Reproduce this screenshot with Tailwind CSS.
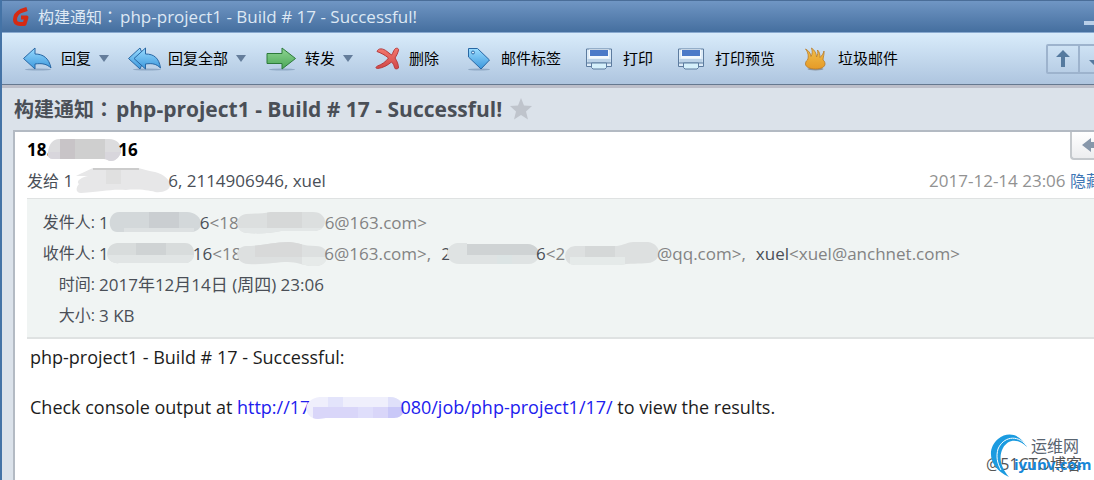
<!DOCTYPE html>
<html lang="zh-CN">
<head>
    <meta charset="UTF-8">
    <meta name="viewport" content="width=device-width, initial-scale=1.0">
    <title>构建通知：php-project1 - Build # 17 - Successful!</title>
    <script src="https://cdn.jsdelivr.net/npm/@tailwindcss/browser@4"></script>
</head>
<body class="min-h-screen flex flex-col overflow-hidden border-l-2 border-[#4473a6] bg-[#dbe2ea] font-['Open_Sans','Noto_Sans_CJK_SC',sans-serif] text-[#4a4f57]">
    <!-- Shared gradients and icons -->
    <svg class="absolute h-0 w-0" aria-hidden="true">
        <defs>
            <linearGradient id="blue" x1="0" y1="0" x2="0" y2="1"><stop offset="0" stop-color="#9adcff"/><stop offset="1" stop-color="#3b97dc"/></linearGradient>
            <linearGradient id="green" x1="0" y1="0" x2="0" y2="1"><stop offset="0" stop-color="#8fd592"/><stop offset="1" stop-color="#4aa657"/></linearGradient>
            <linearGradient id="red" x1="0" y1="0" x2="0" y2="1"><stop offset="0" stop-color="#f4776d"/><stop offset="1" stop-color="#d04848"/></linearGradient>
            <linearGradient id="gold" x1="0" y1="0" x2="0" y2="1"><stop offset="0" stop-color="#f2c04a"/><stop offset="1" stop-color="#e59a27"/></linearGradient>
        </defs>
        <symbol id="printer" viewBox="0 0 28 24">
            <path d="M1.500 2h25v17.500h-25z" fill="#dcebf8" stroke="#5d7c9f"/>
            <path d="M4 2.500h20v9H4z" fill="#f4f9fd"/>
            <path d="M5 3h18v6H5z" fill="#4c7ac8"/>
            <path d="M2.500 12h23v4h-23z" fill="#bcd3e8"/>
            <path d="M2 16h24" stroke="#5d7c9f"/>
            <path d="M6.500 16h15v4.500L20 22H8l-1.500-1.500z" fill="#d5f0fb" stroke="#5d7c9f"/>
        </symbol>
    </svg>

    <header class="flex h-8 shrink-0 items-center border-t border-[#4a6d98] bg-linear-to-b from-[#7096c4] to-[#456f9f] pl-[10px] text-[17px] leading-5 text-[#dde8f4]">
        <svg class="mr-2 h-5 w-[18px]" viewBox="0 0 18 20" fill="none">
            <path d="M15 2 9 4C5 6 3 9 3 12.500c0 3 2 4.500 5 4.500h4.500l2-6.500H9" stroke="#d62a12" stroke-width="4" stroke-linejoin="round"/>
        </svg>
        <h1 class="whitespace-nowrap"><span class="mr-0.5 text-[16px]">构建通知<span class="font-['Noto_Sans_CJK_JP']" lang="ja">：</span></span>php-project1 - Build # 17 - Successful!</h1>
        <button class="mt-3 -mr-2 ml-auto h-1 w-[18px] bg-[#b9cfe8]" aria-label="最小化"></button>
    </header>

    <nav class="flex h-[53px] shrink-0 items-center border-t border-b border-t-[#89aad0] border-b-[#65788f] bg-linear-to-b from-[#d9ecfb] to-[#aec5df] pl-5 text-[15px] whitespace-nowrap text-black">
        <button class="flex items-center">
            <svg class="mr-2 h-6 w-[31px]" viewBox="0 0 31 24">
                <ellipse cx="16" cy="22.500" rx="13" ry="1" fill="#90a9c5"/>
                <path d="M1.500 11.500 13 1v6c8 0 14 4 16 14-4-4-9-5-16-4v5z" fill="url(#blue)" stroke="#2867a4"/>
            </svg>
            回复
            <svg class="ml-2 h-2 w-[10px]" viewBox="0 0 10 8"><path d="M0 0h10L5 7z" fill="#647d9b"/></svg>
        </button>
        <button class="ml-[18px] flex items-center">
            <svg class="mr-[6px] h-6 w-[35px]" viewBox="0 0 35 24">
                <ellipse cx="20" cy="22.500" rx="14" ry="1" fill="#90a9c5"/>
                <path d="M1.500 11.500 13 1l2 5-5 5.500 5 6-2 4.500z" fill="url(#blue)" stroke="#2867a4"/>
                <path d="M7 11.500 18.500 1v6C27 7 32 11 33.500 21c-4-4-8-5-15-4v5z" fill="url(#blue)" stroke="#2867a4"/>
            </svg>
            回复全部
            <svg class="ml-2 h-2 w-[10px]" viewBox="0 0 10 8"><path d="M0 0h10L5 7z" fill="#647d9b"/></svg>
        </button>
        <button class="ml-5 flex items-center">
            <svg class="mr-2 h-6 w-[31px]" viewBox="0 0 31 24">
                <ellipse cx="16" cy="22.500" rx="13" ry="1" fill="#90a9c5"/>
                <path d="M1 6.500h15V1l13.500 10.500L16 22v-5.500H1z" fill="url(#green)" stroke="#2c7a3a"/>
            </svg>
            转发
            <svg class="ml-2 h-2 w-[10px]" viewBox="0 0 10 8"><path d="M0 0h10L5 7z" fill="#647d9b"/></svg>
        </button>
        <button class="ml-[22px] flex items-center">
            <svg class="mr-2 h-6 w-[26px]" viewBox="0 0 26 24">
                <path d="M2 4.500C3 1 8 1 12 4.500l4.500 3.500C18 6 18.500 4 19.500 2.500c1-2 4.500-1.500 4 .5-.5 3-2 5.500-3.500 8 2 3 3.500 6.500 3.500 10-1.500 1.500-4 1-4-.5-.5-2.500-1.500-4-3-5.500-4 3.500-9 6-14 6.500-2 0-2-1.500 0-2.500 4.500-1.500 8.500-4.500 11-8C10 8 6 6 2 4.500z" fill="url(#red)" stroke="#b63a3c"/>
            </svg>
            删除
        </button>
        <button class="ml-7 flex items-center">
            <svg class="mr-[10px] h-6 w-6" viewBox="0 0 24 24">
                <ellipse cx="12" cy="22.500" rx="11" ry="1" fill="#90a9c5"/>
                <path d="M1.500 1.500h9L22.500 13 14 22 1.500 10z" fill="url(#blue)" stroke="#2867a4"/>
                <circle cx="6" cy="5.500" r="1.500" fill="#d9ecfb" stroke="#2867a4"/>
            </svg>
            邮件标签
        </button>
        <button class="ml-6 flex items-center">
            <svg class="mr-[10px] h-6 w-7"><use href="#printer"/></svg>
            打印
        </button>
        <button class="ml-6 flex items-center">
            <svg class="mr-[10px] h-6 w-7"><use href="#printer"/></svg>
            打印预览
        </button>
        <button class="ml-[29px] flex items-center">
            <svg class="mr-3 h-6 w-[22px]" viewBox="0 0 22 24">
                <ellipse cx="11.500" cy="22" rx="8" ry="1.500" fill="#8b95a0"/>
                <path d="M1.500 2c3 1.500 5 4 5.500 7.500 1.500-2.500 1.500-5.500.5-8.500 3.500 2.500 5 5.500 5 9 1.500-2 1.500-4.500 1-7 2 2 2.500 4.500 2.500 7.500 1.500-1.500 3.500-4 4-6.500.5 3-1 6.500-1 9 1.500 1 2 2.500 2 4 0 3-4 5-9.500 5S1.500 20 1.500 17c0-1.500.5-3 2-4C5 9.500 4 5 1.500 2z" fill="url(#gold)" stroke="#b87a28" stroke-width=".8"/>
            </svg>
            垃圾邮件
        </button>
        <div class="-mr-5 ml-auto flex rounded-xs border-2 border-[#9db3cd] text-[#557a9f]">
            <button class="flex h-[26px] w-8 items-center justify-center border-r-2 border-[#9db3cd]" aria-label="上一封">
                <svg class="h-[17px] w-[14px]" viewBox="0 0 14 17" fill="currentColor"><path d="m7 0 7 7H9v10H5V7H0z"/></svg>
            </button>
            <button class="flex h-[26px] w-8 items-center justify-center" aria-label="下一封">
                <svg class="h-[17px] w-[14px]" viewBox="0 0 14 17" fill="currentColor"><path d="m7 17 7-7H9V0H5v10H0z"/></svg>
            </button>
        </div>
    </nav>

    <div class="flex h-[45px] shrink-0 items-center border-t-3 border-[#bcbec9] pl-3">
        <h2 class="text-[21px] leading-7 font-bold whitespace-nowrap"><span class="mr-0.5 text-[20px]">构建通知<span class="font-['Noto_Sans_CJK_JP']" lang="ja">：</span></span>php-project1 - Build # 17 - Successful!</h2>
        <button class="ml-2" aria-label="星标">
            <svg class="h-[22px] w-[22px]" viewBox="0 0 22 22"><path d="m11 0 3 7.500 8 .5-6 5.500 2 8-7-4.500L4 21.500l2-8L0 8l8-.5z" fill="#bfc4cc"/></svg>
        </button>
    </div>

    <main class="ml-[11px] flex-1 border-t-2 border-l-2 border-[#b3bac3] bg-white pl-3">
        <div class="flex h-9 items-center justify-between text-[17px] font-bold text-black">
            <p class="flex items-center">18.<svg class="-mx-1 h-[22px] w-[75px]" viewBox="0 0 75 22">
                    <clipPath id="c1"><path d="M12 0h50c8 0 12 5 12 11s-5 11-10 11c-3 0-4-2-7-2H6c-4 0-6-3-5-7C2 5 6 0 12 0z"/></clipPath>
                    <g clip-path="url(#c1)"><path d="M0 0h75v22H0z" fill="#dcdcde"/><path d="M13 0h15v22H13z" fill="#c8c4c7"/><path d="M28 0h30v22H28z" fill="#cfcfcf"/><path d="M0 13h13v9H0zM58 13h17v9H58z" fill="#d8d6dc"/></g>
                </svg>16</p>
            <button class="-mr-4 flex h-7 w-10 items-center justify-center self-start rounded-bl-sm border-b-2 border-l-2 border-[#c5c9cd] bg-linear-to-b from-white to-[#ecedef]" aria-label="快速回复">
                <svg class="h-[14px] w-[18px]" viewBox="0 0 18 14"><path d="m0 7 9-7v4h9v6H9v4z" fill="#8797aa"/></svg>
            </button>
        </div>
        <div class="flex h-[30px] items-center pb-1 text-[17px]">
            <p class="flex items-center whitespace-pre"><span class="text-[16px]">发给</span> 1<svg class="-mx-0.5 h-[26px] w-[99px]" viewBox="0 0 99 26">
                    <clipPath id="c2"><path d="M5 8c6-3 12-6 17-8h45c6 1 9 3 17 4 9 2 15 8 15 13s-7 8-15 7c-7-2-19-3-29-2-17-1-24 2-45 3-6 0-5-6-2-9-3-2 0-6 9-8z"/></clipPath>
                    <g clip-path="url(#c2)"><path d="M0 0h99v26H0z" fill="#e7e7e8"/><path d="M22 0h46v2H22z" fill="#ccc"/><path d="M35 2h15v14H35z" fill="#e0e0e0"/></g>
                </svg>6, 2114906946, xuel</p>
            <p class="-mr-2 ml-auto whitespace-nowrap text-[#929292]"><time>2017-12-14 23:06</time> <a href="#" class="text-[16px] text-[#3e76b5]">隐藏</a></p>
        </div>
        <dl class="grid grid-cols-[54px_1fr] gap-x-1 border-t border-b-2 border-[#dfe2e2] bg-[#f0f4f3] pt-2 pb-1.5 pl-[14px] text-[17px] leading-[31px] whitespace-nowrap">
            <dt class="text-right text-[16px]">发件人:</dt>
            <dd class="flex items-center">1<svg class="-mr-0.5 h-[21px] w-[93px]" viewBox="0 0 93 21">
                    <clipPath id="c3"><path d="M10 0h68c8 0 15 6 14 13-1 4-5 7-10 7H8c-10 0-10-20 2-20z"/></clipPath>
                    <g clip-path="url(#c3)"><path d="M0 0h93v21H0z" fill="#d3d8da"/><path d="M40 0h30v16H40z" fill="#caced1"/><path d="M15 16h70v5H15z" fill="#dde1e2"/></g>
                </svg>6<span class="flex items-center text-[#838383]">&lt;18<svg class="-ml-0.5 h-[22px] w-[88px]" viewBox="0 0 88 22">
                    <clipPath id="c4"><path d="M9 2c9-1 16 0 25-2h42c8 0 12 5 12 10s-5 9-11 9H44c-9 2-21 3-33 2C-2 21-4 4 9 2z"/></clipPath>
                    <g clip-path="url(#c4)"><path d="M0 0h88v22H0z" fill="#dcdfdf"/><path d="M30 0h35v16H30z" fill="#d6d8d8"/><path d="M0 16h88v6H0z" fill="#e3e7e7"/></g>
                </svg>6@163.com&gt;</span></dd>
            <dt class="text-right text-[16px]">收件人:</dt>
            <dd class="flex items-center">1<svg class="-mx-0.5 h-[21px] w-[88px]" viewBox="0 0 88 21">
                    <clipPath id="c5"><path d="M10 0h68c12 0 12 19 1 20H13C-4 22-3 1 10 0z"/></clipPath>
                    <g clip-path="url(#c5)"><path d="M0 0h88v21H0z" fill="#d8dcdc"/><path d="M29 0h30v12H29z" fill="#cfd3d4"/><path d="M0 12h88v9H0z" fill="#e1e5e5"/></g>
                </svg>16<span class="flex items-center text-[#838383]">&lt;18<svg class="-mx-1 h-[24px] w-[91px]" viewBox="0 0 91 24">
                    <clipPath id="c6"><path d="M9 4c15 0 28-4 42-4 10 0 14 4 28 4 15 0 15 19 0 20-9 1-18-4-28-4-12 0-22 3-40 2C-2 22-4 5 9 4z"/></clipPath>
                    <g clip-path="url(#c6)"><path d="M0 0h91v24H0z" fill="#dde0e0"/><path d="M18 0h47v15H18z" fill="#d8d9d9"/><path d="M65 15h26v9H65z" fill="#e6eae9"/></g>
                </svg>6@163.com&gt;,</span>
                <span class="ml-2.5">2</span><svg class="-mx-1 h-[21px] w-[93px]" viewBox="0 0 93 21">
                    <clipPath id="c7"><path d="M10 0h10v1h60c15 0 16 19 2 20H12C-4 20-3 2 10 0z"/></clipPath>
                    <g clip-path="url(#c7)"><path d="M0 0h93v21H0z" fill="#dfe3e3"/><path d="M20 0h73v12H20z" fill="#cfd3d4"/><path d="M50 12h15v9H50z" fill="#dce4e4"/></g>
                </svg>6<span class="flex items-center text-[#838383]">&lt;2<svg class="-mr-0.5 h-[24px] w-[94px]" viewBox="0 0 94 24">
                    <clipPath id="c8"><path d="M10 4h42c7-1 11-4 16-4h15c15 2 14 20 0 21-8 1-19 0-29 2H12C-4 24-3 5 10 4z"/></clipPath>
                    <g clip-path="url(#c8)"><path d="M0 0h94v24H0z" fill="#dde0e0"/><path d="M20 0h30v15H20z" fill="#d5d8d8"/><path d="M5 15h55v9H5z" fill="#e5eae9"/></g>
                </svg>@qq.com&gt;,</span>
                <span class="ml-2.5">xuel</span><span class="text-[#838383]">&lt;xuel@anchnet.com&gt;</span></dd>
            <dt class="text-right text-[16px]">时间:</dt>
            <dd>2017年12月14日 (周四) 23:06</dd>
            <dt class="text-right text-[16px]">大小:</dt>
            <dd>3 KB</dd>
        </dl>
        <article class="pt-1.5 pl-[3px] text-[18px] leading-[25px] text-[#1c1c1c]">
            <p>php-project1 - Build # 17 - Successful:</p>
            <p class="mt-[25px] flex items-center whitespace-pre">Check console output at <a href="#" class="flex items-center text-[#2020ee]">http://17<svg class="-mx-1 h-[22px] w-[98px]" viewBox="0 0 98 22">
                    <clipPath id="c9"><path d="M14 0h70c8 0 14 6 14 12s-5 9-10 9H20c-3 0-5 1-8 1C-3 21-5 2 14 0z"/></clipPath>
                    <g clip-path="url(#c9)"><path d="M0 0h98v22H0z" fill="#efeffc"/><path d="M22 0h15v10H22z" fill="#e3e4fb"/><path d="M7 10h76v12H7z" fill="#d9d6f9"/><path d="M52 10h15v12H52z" fill="#dfdefb"/><path d="M82 0h16v10H82z" fill="#dfe0fa"/><path d="M82 10h16v12H82z" fill="#c9c8f8"/></g>
                </svg>080/job/php-project1/17/</a> to view the results.</p>
        </article>
    </main>

    <!-- Watermark -->
    <div class="absolute right-0 bottom-0 h-[50px] w-[108px] overflow-hidden" aria-hidden="true">
        <p class="absolute bottom-1.5 left-0 text-[16px] leading-5 whitespace-nowrap text-[#555]">@51CTO博客</p>
        <svg class="absolute top-0.5 left-1 h-12 w-10" viewBox="0 0 40 48">
            <path d="M37 15C30 2 18-1 8 7c-12 10-9 29 11 38C11 36 8 25 13 16 18 7 28 6 37 15z" fill="#1b9be0"/>
            <path d="M36 13C27 2 13 5 8 17c-2 7-1 14 3 21" fill="none" stroke="#fff" stroke-width="1"/>
        </svg>
        <p class="absolute top-1.5 left-[45px] text-[16px] leading-5 text-[#596470]">运维网</p>
        <p class="absolute bottom-2 left-7 text-[15px] leading-4 font-bold text-[#1787d8]">iyunv.com</p>
    </div>
</body>
</html>
